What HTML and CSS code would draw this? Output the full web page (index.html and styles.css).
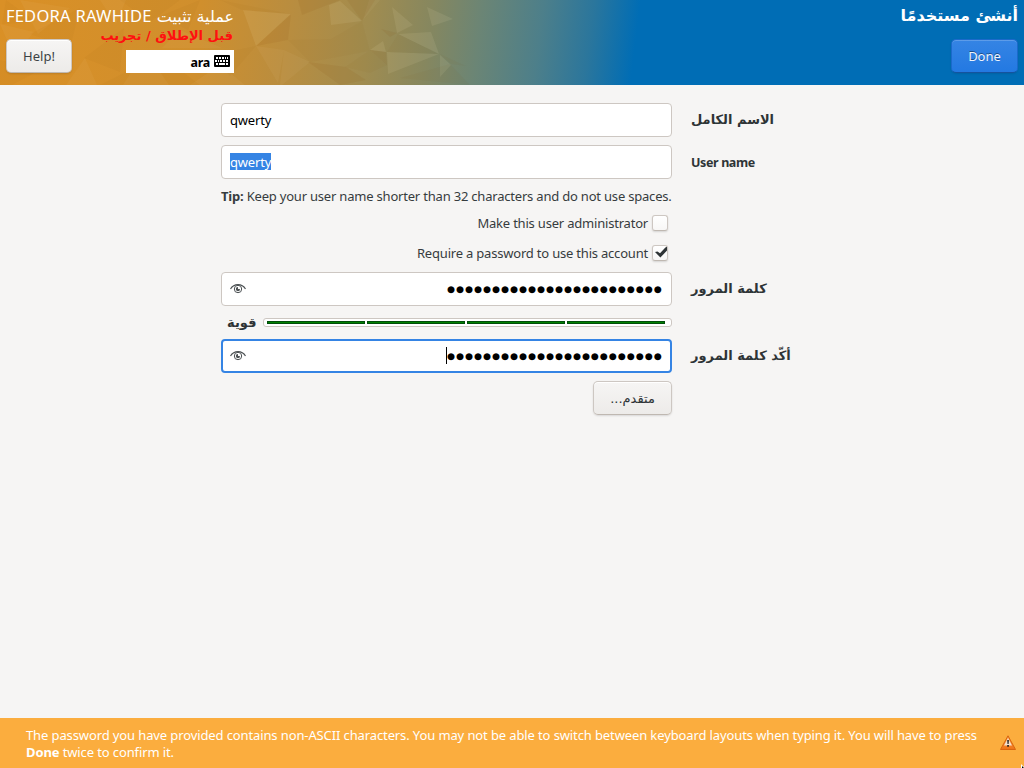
FILE: index.html
```html
<!DOCTYPE html>
<html lang="ar">
<head>
<meta charset="utf-8">
<title>أنشئ مستخدمًا</title>
<link rel="stylesheet" href="styles.css">
</head>
<body>
<header class="topbar">
  <svg class="facets" width="640" height="85" viewBox="0 0 640 85" aria-hidden="true">
    <g fill="#fff3c4">
      <path opacity=".09" d="M243 10L291 14 256 46zM329 5l11-4 22 20-31 4zM392 7l21 18-16 8zM398 34l33-2 8 22zM387 52l52 2-51 20zM440 55l11 10-11 12zM427 7l26 12-21 7zM370 50l13-9 3 11z"/>
      <path opacity=".05" d="M284 50l26 12-28 23-2 0zM256 46l28 4-6 33zM85 58l12 27H66zM0 24l34 8-20 24zM100 0l26 0-10 24zM180 30l42 18-60 0zM20 0l50 8-32 26zM145 50l-22 35h46zM190 85l30-20 25 20zM363 20l17-20-11 0z"/>
    </g>
    <g fill="#7a4300">
      <path opacity=".08" d="M256 46l35-32-3 26zM298 0h42l-38 15zM347 0h28l-13 21zM308 62l38 5 20 13-26 5zM370 50l16 2 1 13zM381 29l16 4-7 4z"/>
      <path opacity=".04" d="M398 34l41 20-52-2zM345 67l25-17 17 15-17 8zM84 58l40-30-4 44zM30 34l50-26-10 40zM160 16l40-16-12 30zM211 55l45-9-26 30zM440 54l26 12-15-2zM0 60l40 10-28 15H0zM288 40l43-1 31-18 8 30-60 11zM100 85l60-30 40 30zM120 0l60 0-30 22zM220 0l70 14-48-4zM400 78l50-14 20 21zM6 0l30 22-34 2z"/>
    </g>
  </svg>
  <div class="product">
    <div class="product-name" dir="rtl">عملية تثبيت <span>FEDORA RAWHIDE</span></div>
    <div class="product-row">
      <button class="button help"><span>Help!</span></button>
      <div class="product-side">
        <div class="prerelease" dir="rtl">قبل الإطلاق<span> / </span>تجريب</div>
        <div class="keyboard">
          <b>ara</b>
          <svg width="16" height="12" viewBox="0 0 16 12" aria-hidden="true">
            <rect width="16" height="12" rx="1" fill="#000"/>
            <path fill="#fff" d="M2 2h2v2H2zM5 2h2v2H5zM8 2h2v2H8zM11 2h1v2h-1zM13 2h1v2h-1zM1 5h2v2H1zM4 5h1v2H4zM6 5h2v2H6zM9 5h2v2H9zM12 5h2v2h-2zM2 8h2v2H2zM5 8h6v2H5zM12 8h2v2h-2z"/>
          </svg>
        </div>
      </div>
    </div>
  </div>
  <div class="screen">
    <h1 class="screen-title" dir="rtl">أنشئ مستخدمًا</h1>
    <button class="button done"><span>Done</span></button>
  </div>
</header>

<main class="form">
  <div class="entry"><span class="typed">qwerty</span></div>
  <div class="label arabic" dir="rtl">الاسم الكامل</div>

  <div class="entry"><span class="typed selected">qwerty</span></div>
  <div class="label latin">User name</div>

  <div class="tip wide"><b>Tip:</b> Keep your user name shorter than 32 characters and do not use spaces.</div>

  <div class="check wide"><span>Make this user administrator</span><i class="box"></i></div>
  <div class="check wide"><span>Require a password to use this account</span><i class="box">
    <svg width="16" height="16" viewBox="0 0 16 16" aria-hidden="true"><path fill="#2e3436" d="M3 7l2.500-.6L8 8.200 13.400 2.600l1.600-.8v3.600L8.400 12.600z"/></svg></i></div>

  <div class="entry secret">
    <svg class="eye" width="16" height="12" viewBox="0 0 16 12" aria-hidden="true"><g fill="none" stroke="#4c5153"><path stroke-width="1.200" d="M.5 6C4 .2 12 .2 15.500 6"/><circle cx="8" cy="6" r="3.700"/></g><path fill="#4c5153" d="M8 4v2h2A2.100 2.100 0 1 1 8 4z"/></svg>
    <span class="dots">●●●●●●●●●●●●●●●●●●●●●●●●</span>
  </div>
  <div class="label arabic" dir="rtl">كلمة المرور</div>

  <div class="strength wide">
    <b class="arabic-text" dir="rtl">قوية</b>
    <div class="meter"><i></i><i></i><i></i><i></i></div>
  </div>

  <div class="entry secret focused">
    <svg class="eye" width="16" height="12" viewBox="0 0 16 12" aria-hidden="true"><g fill="none" stroke="#4c5153"><path stroke-width="1.200" d="M.5 6C4 .2 12 .2 15.500 6"/><circle cx="8" cy="6" r="3.700"/></g><path fill="#4c5153" d="M8 4v2h2A2.100 2.100 0 1 1 8 4z"/></svg>
    <span class="caret"></span><span class="dots">●●●●●●●●●●●●●●●●●●●●●●●●</span>
  </div>
  <div class="label arabic" dir="rtl">أكّد كلمة المرور</div>

  <button class="button advanced" dir="rtl">متقدم...</button>
</main>

<footer class="warning">
  <p>The password you have provided contains non-ASCII characters. You may not be able to switch between keyboard layouts when typing it. You will have to press<br><b>Done</b> twice to confirm it.</p>
  <svg width="16" height="16" viewBox="0 0 16 16" aria-hidden="true">
    <defs><linearGradient id="warn" x1="0" y1="0" x2="0" y2="1"><stop offset="0" stop-color="#f9a04c"/><stop offset="1" stop-color="#ef7216"/></linearGradient></defs>
    <path fill="url(#warn)" stroke="#d8650f" stroke-linejoin="round" d="M8 .8L15.500 14.500H.5z"/>
    <path fill="#f3dfcc" d="M8 3L12 10.500H4z"/>
    <path fill="#222" d="M7.200 5h1.700l-.3 4H7.500zM7.200 10h1.700v1.700H7.200z"/>
  </svg>
</footer>
<svg class="pointer" width="3" height="4" viewBox="0 0 3 4" aria-hidden="true"><path d="M0 0v4h3V3z" fill="#fff"/><path d="M1 2l2 2H1z" fill="#000"/></svg>
</body>
</html>
```
FILE: styles.css
```css
* { box-sizing: border-box; }
body {
  margin: 0;
  width: 1024px;
  height: 768px;
  overflow: hidden;
  display: flex;
  flex-direction: column;
  background: #f6f5f4;
  color: #2e3436;
  font: 13px/17px "Noto Sans", "DejaVu Sans", sans-serif;
}
.topbar {
  position: relative;
  height: 85px;
  flex: none;
  display: flex;
  justify-content: space-between;
  color: #fff;
  background: linear-gradient(97deg, #da9026 0, #d08f2d 200px, #b98d3f 290px, #a08c50 370px, #86875f 430px, #6b8575 480px, #4d7f8a 540px, #2b769c 590px, #006db5 636px);
}
.facets { position: absolute; left: 0; top: 0; }
.product { position: relative; width: 228px; margin-left: 6px; padding-top: 6px; }
.product-name { font: 16px/20px "DejaVu Sans", sans-serif; white-space: nowrap; }
.product-name span { font-family: "Noto Sans", sans-serif; font-size: 16.500px; letter-spacing: .25px; }
.product-row { display: flex; justify-content: space-between; align-items: flex-start; margin-top: -1px; }
.button {
  height: 34px;
  padding: 0;
  border: 1px solid #cdc7c2;
  border-bottom-color: #bfb8b1;
  border-radius: 5px;
  background: linear-gradient(#f6f5f4, #edebe9);
  box-shadow: inset 0 1px #fff, 0 1px 2px rgba(0,0,0,.12);
  color: #2e3436;
  font: 13px/17px "Noto Sans", sans-serif;
}
.help { width: 66px; margin-top: 13px; }
.help span, .done span { opacity: .92; }
.product-side { display: flex; flex-direction: column; align-items: flex-end; }
.prerelease {
  margin: 1px 0 -1px;
  padding-right: 1px;
  font: bold 13px/18px "DejaVu Sans", sans-serif;
  color: #ff1010;
  white-space: nowrap;
}
.prerelease span { letter-spacing: -.5px; }
.keyboard {
  width: 108px;
  height: 23px;
  margin-top: 6px;
  padding: 0 4px;
  display: flex;
  align-items: center;
  justify-content: flex-end;
  gap: 4px;
  background: #fff;
  color: #000;
}
.keyboard b { padding-top: 2px; font-size: 12.500px; letter-spacing: -.3px; }
.keyboard svg { margin-top: -1px; }
.screen { position: relative; display: flex; flex-direction: column; align-items: flex-end; padding: 6px 6px 0 0; }
.screen-title { margin: 0; font: bold 16px/20px "DejaVu Sans", sans-serif; }
.done {
  width: 67px;
  margin-top: 13px;
  border-color: #1b6acb;
  border-bottom-color: #15539e;
  background: linear-gradient(#3584e4, #2379e2);
  box-shadow: inset 0 1px rgba(255,255,255,.2), 0 1px 2px rgba(0,0,0,.1);
  color: #fff;
  text-shadow: 0 -1px rgba(0,0,0,.45);
}
.form {
  flex: 1;
  display: grid;
  grid-template-columns: 451px 200px;
  grid-template-rows: 34px 34px 17px 22px 22px 34px 17px 34px 34px;
  column-gap: 19px;
  row-gap: 8px;
  padding: 18px 0 0 221px;
}
.wide { grid-column: 1; }
.entry {
  grid-column: 1;
  display: flex;
  align-items: center;
  padding: 0 8px;
  border: 1px solid #cdc7c2;
  border-radius: 4px;
  background: #fff;
  color: #000;
}
.typed { letter-spacing: -.17px; }
.selected {
  height: 17px;
  margin-top: -1px;
  padding-top: 1px;
  line-height: 17px;
  background: #3584e4;
  color: #fff;
}
.label { grid-column: 2; align-self: center; justify-self: start; font-weight: bold; white-space: nowrap; }
.latin { font-size: 12.500px; letter-spacing: -.38px; }
.arabic, .arabic-text { font: bold 13px/17px "DejaVu Sans", sans-serif; }
.arabic { padding-bottom: 2px; }
.tip { padding-top: 1px; white-space: nowrap; letter-spacing: -.2px; color: #363c3e; }
.check { display: flex; align-items: center; justify-content: flex-end; gap: 4px; padding-right: 4px; letter-spacing: -.2px; color: #363c3e; }
.box {
  width: 16px;
  height: 16px;
  display: block;
  border: 1px solid #cdc7c2;
  border-bottom-color: #bfb8b1;
  border-radius: 3px;
  background: linear-gradient(#fff, #f8f7f6);
  box-shadow: 0 1px 2px rgba(0,0,0,.14);
}
.box svg { display: block; margin: -1px; }
.secret { justify-content: flex-end; }
.eye { margin-right: auto; }
.dots { font: 9.100px/17px "DejaVu Sans", sans-serif; letter-spacing: 1.050px; }
.focused { border: 2px solid #3584e4; padding: 0 7px; }
.caret { width: 1px; height: 17px; margin-top: -1px; background: #000; }
.strength { display: flex; align-items: center; justify-content: space-between; padding-left: 6px; }
.meter {
  width: 409px;
  height: 9px;
  display: flex;
  gap: 2px;
  padding: 2px 3px;
  border: 1px solid #cdc7c2;
  border-radius: 3px;
  background: #fff;
}
.meter i { width: 98px; height: 3px; background: #008000; border: 1px solid #004d0a; }
.advanced { grid-column: 1; width: 79px; justify-self: end; font-family: "DejaVu Sans", sans-serif; }
.warning {
  height: 50px;
  flex: none;
  display: flex;
  align-items: center;
  justify-content: space-between;
  padding: 0 8px 0 26px;
  background: #fbad3e;
  color: #fff;
}
.warning p { margin: 2px 0 0; white-space: nowrap; letter-spacing: -.115px; }
.pointer { position: absolute; left: 1021px; top: 764px; }
```
